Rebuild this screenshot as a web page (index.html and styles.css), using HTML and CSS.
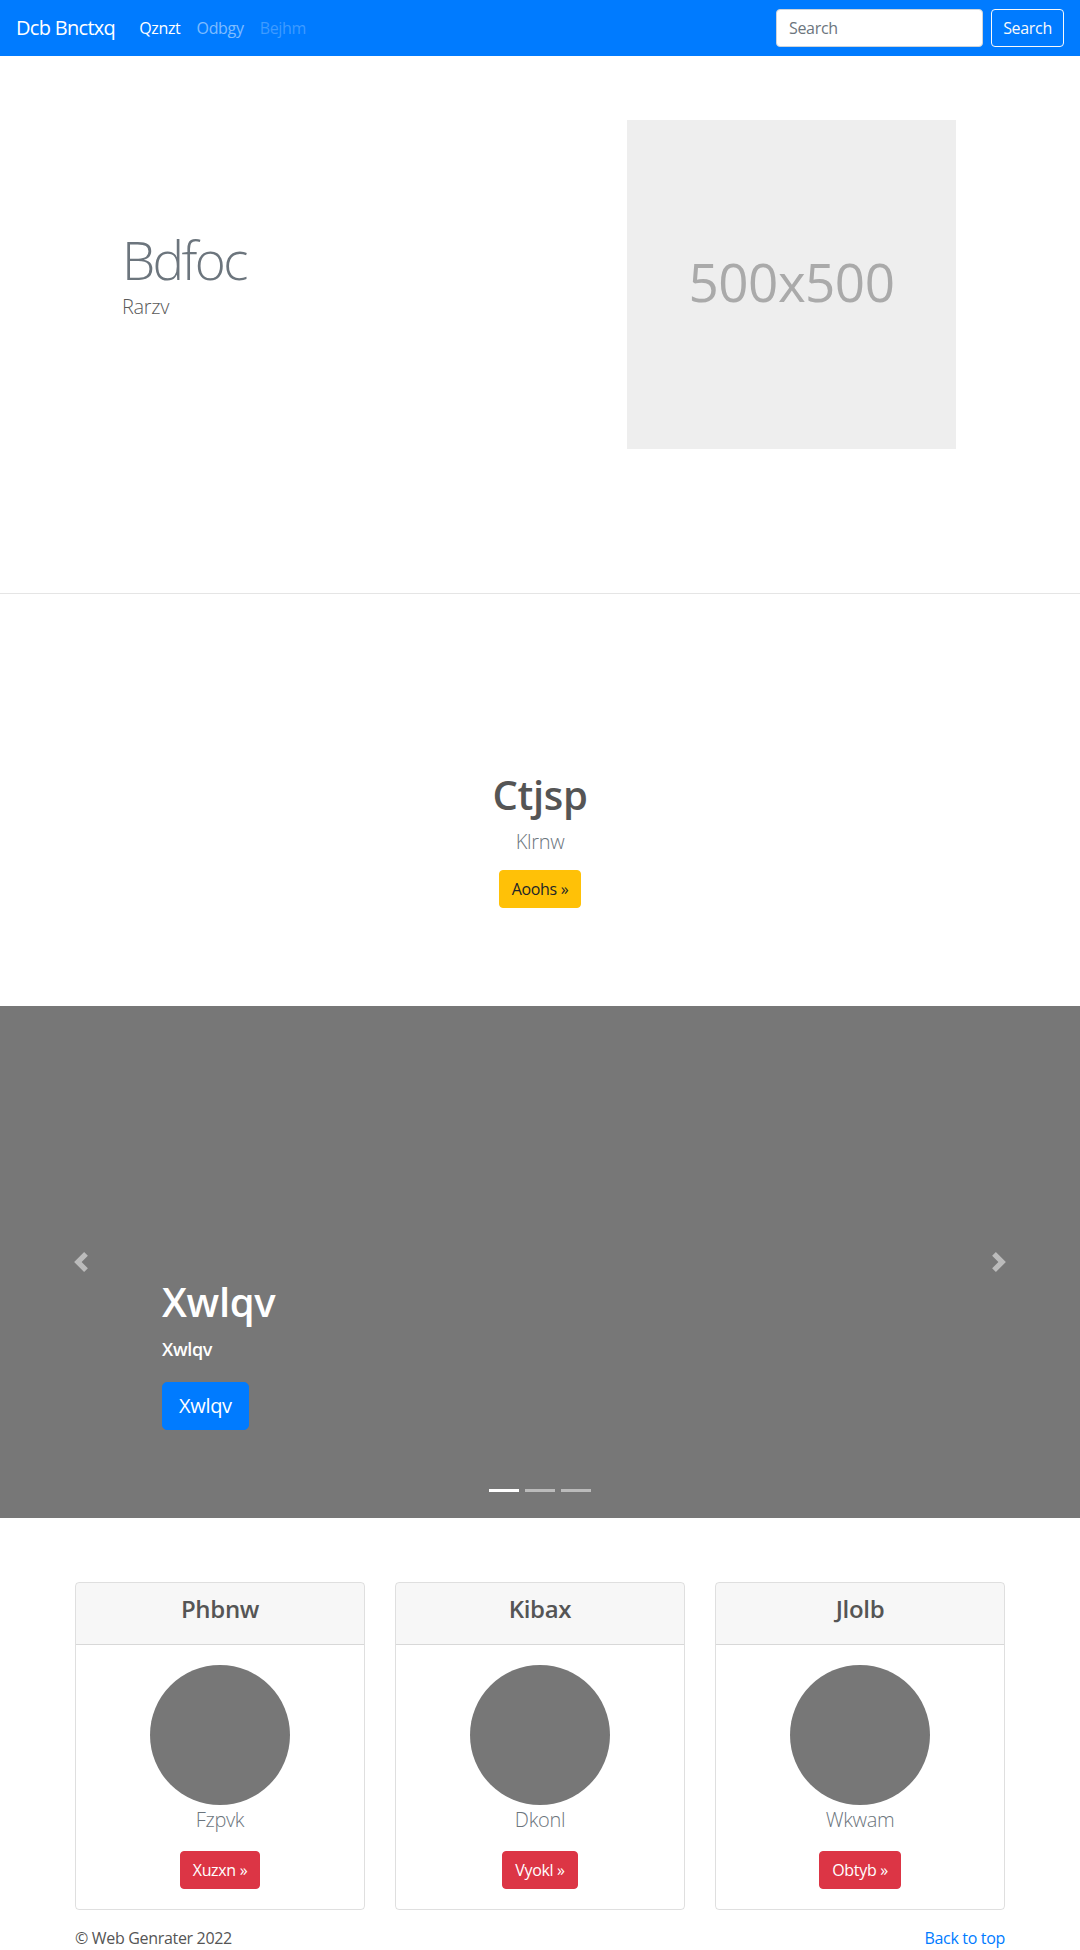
FILE: index.html
```html
<!DOCTYPE html>
<html lang="en">
<head>
<meta charset="utf-8">
<title>Dcb Bnctxq</title>
<link rel="stylesheet" href="styles.css">
</head>
<body>
<nav class="navbar">
  <a class="brand" href="#">Dcb Bnctxq</a>
  <ul class="nav">
    <li><a class="nav-link active" href="#">Qznzt</a></li>
    <li><a class="nav-link" href="#">Odbgy</a></li>
    <li><a class="nav-link disabled" href="#">Bejhm</a></li>
  </ul>
  <form class="search">
    <input class="search-input" type="text" placeholder="Search">
    <button class="btn btn-outline-light" type="button">Search</button>
  </form>
</nav>

<section class="hero">
  <div class="hero-text">
    <h1 class="display">Bdfoc</h1>
    <p class="lead lead-dark">Rarzv</p>
  </div>
  <div class="placeholder">500x500</div>
</section>

<section class="feature">
  <h1 class="feature-title">Ctjsp</h1>
  <p class="lead lead-muted">Klrnw</p>
  <div class="feature-actions"><a class="btn btn-warning" href="#">Aoohs »</a></div>
</section>

<section class="carousel">
  <div class="carousel-item">
    <h1 class="caption-title">Xwlqv</h1>
    <p class="caption-sub">Xwlqv</p>
    <div class="caption-actions"><a class="btn btn-lg btn-primary" href="#">Xwlqv</a></div>
  </div>
  <a class="control control-prev" href="#">
    <svg viewBox="0 0 8 8" width="20" height="20"><path fill="#fff" d="M5.25 0l-4 4 4 4 1.5-1.5L4.25 4l2.5-2.5L5.25 0z"/></svg>
  </a>
  <a class="control control-next" href="#">
    <svg viewBox="0 0 8 8" width="20" height="20"><path fill="#fff" d="M2.75 0l-1.5 1.5L3.75 4l-2.5 2.5L2.75 8l4-4-4-4z"/></svg>
  </a>
  <ol class="indicators">
    <li class="active"></li>
    <li></li>
    <li></li>
  </ol>
</section>

<section class="cards">
  <div class="card">
    <div class="card-header"><h4 class="card-title">Phbnw</h4></div>
    <div class="card-body">
      <svg class="avatar" width="140" height="140" viewBox="0 0 140 140"><circle cx="70" cy="70" r="70" fill="#777"/></svg>
      <p class="lead lead-muted">Fzpvk</p>
      <div class="card-actions"><a class="btn btn-danger" href="#">Xuzxn »</a></div>
    </div>
  </div>
  <div class="card">
    <div class="card-header"><h4 class="card-title">Kibax</h4></div>
    <div class="card-body">
      <svg class="avatar" width="140" height="140" viewBox="0 0 140 140"><circle cx="70" cy="70" r="70" fill="#777"/></svg>
      <p class="lead lead-muted">Dkonl</p>
      <div class="card-actions"><a class="btn btn-danger" href="#">Vyokl »</a></div>
    </div>
  </div>
  <div class="card">
    <div class="card-header"><h4 class="card-title">Jlolb</h4></div>
    <div class="card-body">
      <svg class="avatar" width="140" height="140" viewBox="0 0 140 140"><circle cx="70" cy="70" r="70" fill="#777"/></svg>
      <p class="lead lead-muted">Wkwam</p>
      <div class="card-actions"><a class="btn btn-danger" href="#">Obtyb »</a></div>
    </div>
  </div>
</section>

<footer class="footer">
  <p class="copy">© Web Genrater 2022</p>
  <a class="back" href="#">Back to top</a>
</footer>
</body>
</html>
```

FILE: styles.css
```css
* { box-sizing: border-box; }
html, body { margin: 0; padding: 0; }
body {
  font-family: "Open Sans", "Noto Sans", "Liberation Sans", sans-serif;
  font-size: 16px;
  line-height: 1.5;
  letter-spacing: -0.02em;
  color: #555;
  background: #fff;
}
a { text-decoration: none; }

/* Navbar */
.navbar {
  display: flex;
  align-items: center;
  height: 56px;
  padding: 0 16px;
  background: #007bff;
}
.brand {
  color: #fff;
  font-size: 20px;
  line-height: 30px;
  letter-spacing: -0.035em;
  margin-right: 16px;
}
.nav {
  display: flex;
  list-style: none;
  margin: 0 auto 0 0;
  padding: 0;
}
.nav-link {
  display: block;
  padding: 8px;
  color: rgba(255,255,255,.5);
}
.nav-link.active { color: #fff; }
.nav-link.disabled { color: rgba(255,255,255,.25); }
.search { display: flex; align-items: center; margin: 0; }
.search-input {
  width: 207px;
  height: 38px;
  padding: 6px 12px;
  margin-right: 8px;
  font: inherit;
  letter-spacing: inherit;
  color: #495057;
  background: #fff;
  border: 1px solid #ced4da;
  border-radius: 4px;
}
.search-input::placeholder { color: #6c757d; }

/* Buttons */
.btn {
  display: inline-block;
  padding: 6px 12px;
  font-size: 16px;
  line-height: 24px;
  letter-spacing: inherit;
  border: 1px solid transparent;
  border-radius: 4px;
  font-family: inherit;
}
.btn-outline-light {
  width: 73px;
  height: 38px;
  padding: 0;
  text-align: center;
  color: #f8f9fa;
  background: transparent;
  border-color: #f8f9fa;
}
.btn-warning { background: #ffc107; border-color: #ffc107; color: #212529; }
.btn-danger { background: #dc3545; border-color: #dc3545; color: #fff; }
.btn-primary { background: #007bff; border-color: #007bff; color: #fff; }
.btn-lg { padding: 8px 16px; font-size: 20px; line-height: 30px; border-radius: 5px; }

/* Hero */
.hero {
  display: flex;
  align-items: flex-start;
  padding: 64px 0 144px;
  border-bottom: 1px solid #e5e5e5;
}
.hero-text {
  width: 540px;
  padding: 108px 0 0 122px;
}
.display {
  margin: 0;
  font-size: 53px;
  line-height: 1.2;
  font-weight: 300;
  letter-spacing: -0.05em;
  color: #6c757d;
}
.lead {
  margin: 0;
  font-size: 20px;
  font-weight: 300;
  line-height: 30px;
}
.lead-dark { color: #5a5a5a; }
.lead-muted { color: #6c757d; }
.placeholder {
  width: 329px;
  height: 329px;
  margin-left: 87px;
  padding-bottom: 6px;
  display: flex;
  align-items: center;
  justify-content: center;
  background: #eee;
  color: #aaa;
  font-size: 53px;
  letter-spacing: -0.01em;
}

/* Feature */
.feature {
  text-align: center;
  padding: 177px 0 98px;
}
.feature-title {
  margin: 0 0 8px;
  font-size: 40px;
  line-height: 1.2;
  font-weight: 600;
  color: #555;
}
.feature .lead { margin-bottom: 13px; }
.feature-actions { display: flex; justify-content: center; }

/* Carousel */
.carousel {
  position: relative;
  height: 512px;
  background: #777;
  overflow: hidden;
}
.carousel-item {
  height: 100%;
  display: flex;
  flex-direction: column;
  justify-content: flex-end;
  padding: 0 15% 88px 162px;
  color: #fff;
}
.caption-title {
  margin: 0 0 8px;
  font-size: 40px;
  line-height: 1.2;
  font-weight: 600;
}
.caption-sub {
  margin: 0 0 18px;
  font-size: 18px;
  line-height: 30px;
  font-weight: 600;
}
.caption-actions { display: flex; }
.control {
  position: absolute;
  top: 0;
  bottom: 0;
  width: 15%;
  display: flex;
  align-items: center;
  justify-content: center;
  opacity: .5;
}
.control-prev { left: 0; }
.control-next { right: 0; }
.control svg { display: block; }
.indicators {
  position: absolute;
  left: 0;
  right: 0;
  bottom: 0;
  display: flex;
  justify-content: center;
  list-style: none;
  margin: 0 0 16px;
  padding: 0;
}
.indicators li {
  width: 30px;
  height: 23px;
  margin: 0 3px;
  border-top: 10px solid transparent;
  border-bottom: 10px solid transparent;
  background: #fff;
  background-clip: padding-box;
  opacity: .5;
}
.indicators li.active { opacity: 1; }

/* Cards */
.cards {
  width: 930px;
  margin: 64px auto 0;
  display: grid;
  grid-template-columns: repeat(3, 1fr);
  gap: 30px;
}
.card {
  border: 1px solid rgba(0,0,0,.125);
  border-radius: 4px;
  text-align: center;
  overflow: hidden;
}
.card-header {
  padding: 12px 20px;
  background: rgba(0,0,0,.03);
  border-bottom: 1px solid rgba(0,0,0,.125);
}
.card-title {
  margin: 0 0 8px;
  font-size: 24px;
  line-height: 1.2;
  font-weight: 600;
  color: #555;
}
.card-body { padding: 20px; }
.avatar { display: block; margin: 0 auto; }
.card-body .lead { margin-bottom: 16px; }
.card-actions { display: flex; justify-content: center; }

/* Footer */
.footer {
  width: 930px;
  margin: 16px auto 0;
  display: flex;
  justify-content: space-between;
}
.copy { margin: 0; }
.back { color: #007bff; }
```
